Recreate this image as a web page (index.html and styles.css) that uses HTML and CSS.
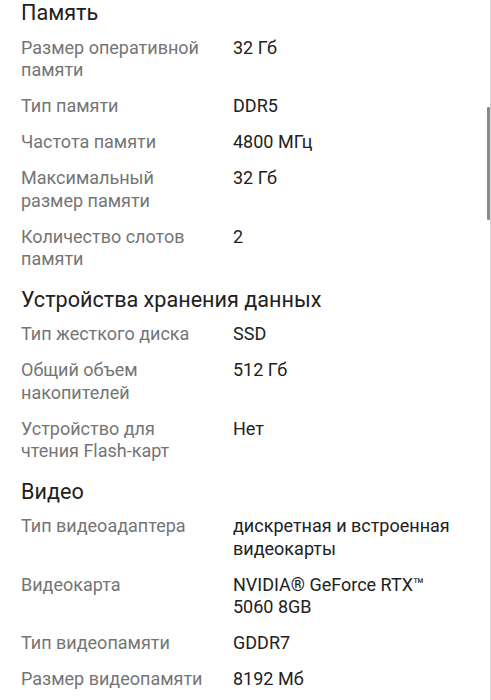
FILE: index.html
```html
<!DOCTYPE html>
<html lang="ru">
<head>
<meta charset="utf-8">
<link rel="stylesheet" href="styles.css">
</head>
<body>
<div class="page">
  <section class="group">
    <h2 class="title">Память</h2>
    <div class="row"><div class="label">Размер оперативной памяти</div><div class="value">32 Гб</div></div>
    <div class="row"><div class="label">Тип памяти</div><div class="value">DDR5</div></div>
    <div class="row"><div class="label">Частота памяти</div><div class="value">4800 МГц</div></div>
    <div class="row"><div class="label">Максимальный размер памяти</div><div class="value">32 Гб</div></div>
    <div class="row"><div class="label">Количество слотов памяти</div><div class="value">2</div></div>
  </section>
  <section class="group">
    <h2 class="title">Устройства хранения данных</h2>
    <div class="row"><div class="label">Тип жесткого диска</div><div class="value">SSD</div></div>
    <div class="row"><div class="label">Общий объем накопителей</div><div class="value">512 Гб</div></div>
    <div class="row"><div class="label">Устройство для чтения Flash-карт</div><div class="value">Нет</div></div>
  </section>
  <section class="group">
    <h2 class="title">Видео</h2>
    <div class="row"><div class="label">Тип видеоадаптера</div><div class="value">дискретная и встроенная видеокарты</div></div>
    <div class="row"><div class="label">Видеокарта</div><div class="value">NVIDIA® GeForce RTX™ 5060 8GB</div></div>
    <div class="row"><div class="label">Тип видеопамяти</div><div class="value">GDDR7</div></div>
    <div class="row"><div class="label">Размер видеопамяти</div><div class="value">8192 Мб</div></div>
  </section>
</div>
<div class="scroll-track"><div class="scroll-thumb"></div></div>
</body>
</html>
```
FILE: styles.css
```css
html, body {
  margin: 0;
  padding: 0;
  background: #fff;
  height: 100%;
  overflow: hidden;
}
body {
  font-family: Roboto, "Noto Sans", sans-serif;
  color: #212121;
}
.page {
  padding: 0 21px 0 21px;
}
.group {
  display: flex;
  flex-direction: column;
  gap: 13.5px;
  margin-bottom: 16px;
}
.title {
  margin: 0 0 -3px 0;
  font-size: 21.6px;
  font-weight: 400;
  line-height: 26px;
  color: #212121;
}
.row {
  display: grid;
  grid-template-columns: 212px 225px;
  font-size: 18px;
  line-height: 22.5px;
}
.label {
  color: #757575;
  padding-right: 22px;
}
.value {
  color: #212121;
}
.scroll-track {
  position: fixed;
  top: 0;
  right: 0;
  width: 3px;
  height: 100%;
  border-right: 1px solid #d6d6d6;
}
.scroll-thumb {
  position: absolute;
  top: 107px;
  left: 0;
  width: 3px;
  height: 113px;
  background: #8a8a8a;
  border-radius: 1px;
}
```
